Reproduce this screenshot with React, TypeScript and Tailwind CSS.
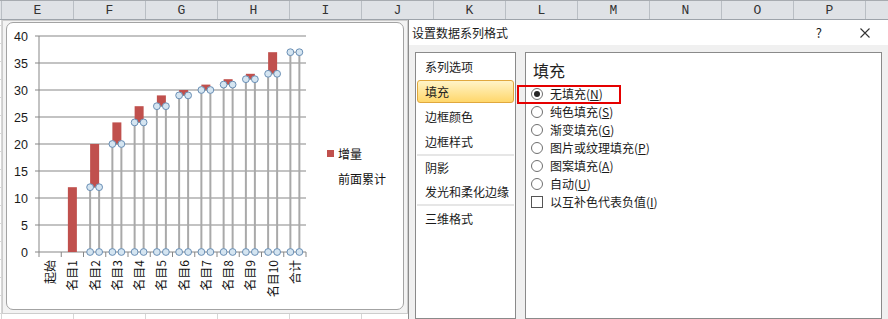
import React from 'react'

const COLS = ['E', 'F', 'G', 'H', 'I', 'J', 'K', 'L', 'M', 'N', 'O', 'P']

const LABELS = ['起始', '名目1', '名目2', '名目3', '名目4', '名目5', '名目6', '名目7', '名目8', '名目9', '名目10', '合计']
// running total before / after each step
const CUM = [0, 12, 20, 24, 27, 29, 30, 31, 32, 33, 37]

const X0 = 39
const CW = 22.25
const cx = (i: number) => X0 + CW * (i + 0.5)
const yOf = (v: number) => 251 - 5.4 * v

const CJK = "font-['Noto_Sans_CJK_SC',sans-serif]"

function SheetHeader() {
  return (
    <div className="flex h-[20px] border-t border-b border-t-[#a7abb0] border-b-[#9da3aa] bg-[#dfe2e6] font-['Liberation_Mono',monospace] text-[13px] text-[#333]">
      <div className="w-[2px] shrink-0 border-r border-[#b9bec4]" />
      {COLS.map((c) => (
        <div key={c} className="flex w-[72px] shrink-0 items-center justify-center border-r border-[#b9bec4] leading-none">
          {c}
        </div>
      ))}
      <div className="flex-1" />
    </div>
  )
}

function WaterfallChart() {
  const grid = [5, 10, 15, 20, 25, 30, 35, 40]
  return (
    <svg width={315} height={285} viewBox="7 23 315 285" className="shrink-0">
      {/* gridlines + ticks */}
      {grid.map((v) => (
        <line key={v} x1={35} x2={306} y1={yOf(v)} y2={yOf(v)} stroke="#878787" strokeWidth={1} />
      ))}
      <line x1={35} x2={306} y1={251} y2={251} stroke="#878787" strokeWidth={1} />
      <line x1={39} x2={39} y1={yOf(40)} y2={251} stroke="#878787" strokeWidth={1} />
      {Array.from({ length: 13 }).map((_, k) => (
        <line key={k} x1={X0 + CW * k} x2={X0 + CW * k} y1={251} y2={256} stroke="#878787" strokeWidth={1} />
      ))}

      {/* y labels */}
      {[0, ...grid].map((v) => (
        <text
          key={v}
          x={28}
          y={yOf(v) + 4.5}
          textAnchor="end"
          fontSize={12.5}
          fontFamily="'Liberation Sans', sans-serif"
          fill="#1a1a1a"
        >
          {v}
        </text>
      ))}

      {/* 增量 bars */}
      {CUM.slice(1).map((top, n) => {
        const i = n + 1
        const base = CUM[i - 1]
        return (
          <rect key={i} x={cx(i) - 4.5} y={yOf(top)} width={9} height={yOf(base) - yOf(top)} fill="#c0504d" />
        )
      })}

      {/* 前面累计 markers with drop lines */}
      {LABELS.map((_, i) => {
        if (i < 2) return null
        const v = CUM[i - 1]
        const xs = [cx(i) - 4.5, cx(i) + 4.5]
        return (
          <g key={i}>
            {xs.map((x) => (
              <line key={x} x1={x} x2={x} y1={yOf(v)} y2={251} stroke="#a9a9a9" strokeWidth={2} />
            ))}
            <line x1={xs[0]} x2={xs[1]} y1={yOf(v)} y2={yOf(v)} stroke="#8a8a8a" strokeWidth={1} />
            {xs.map((x) => (
              <g key={'c' + x}>
                <circle cx={x} cy={yOf(v)} r={3.4} fill="#d5e5f1" stroke="#6a8fb5" strokeWidth={1} />
                <circle cx={x} cy={251} r={3.4} fill="#d5e5f1" stroke="#6a8fb5" strokeWidth={1} />
              </g>
            ))}
          </g>
        )
      })}

      {/* category labels, rotated */}
      {LABELS.map((l, i) => (
        <text
          key={l}
          transform={`translate(${cx(i) + 5},259) rotate(-90)`}
          textAnchor="end"
          fontSize={12}
          fontFamily="'Noto Sans CJK SC', sans-serif"
          fill="#111"
        >
          {l}
        </text>
      ))}
    </svg>
  )
}

function Legend() {
  return (
    <div className={`flex flex-col pl-[5px] text-[12px] text-[#111] ${CJK}`}>
      <div className="flex h-[25px] items-center gap-[4px]">
        <span className="h-[7px] w-[7px] bg-[#c0504d]" />
        <span>增量</span>
      </div>
      <div className="flex h-[25px] items-center gap-[4px]">
        <span className="h-[7px] w-[7px]" />
        <span>前面累计</span>
      </div>
    </div>
  )
}

function Radio({ checked }: { checked?: boolean }) {
  return (
    <span className="flex h-[12px] w-[12px] shrink-0 items-center justify-center rounded-full border border-[#6f6f6f] bg-white">
      {checked && <span className="h-[6px] w-[6px] rounded-full bg-[#262626]" />}
    </span>
  )
}

const FILL_OPTS: Array<{ label: string; key: string; checked?: boolean }> = [
  { label: '无填充', key: 'N', checked: true },
  { label: '纯色填充', key: 'S' },
  { label: '渐变填充', key: 'G' },
  { label: '图片或纹理填充', key: 'P' },
  { label: '图案填充', key: 'A' },
  { label: '自动', key: 'U' },
]

function NavItem({ label, active, h = 'h-[25px]' }: { label: string; active?: boolean; h?: string }) {
  return (
    <div className={`flex ${h} items-center px-[1px]`}>
      <div
        className={`flex h-[23px] w-full items-center rounded-[3px] pl-[7px] ${
          active ? 'border border-[#e0a83e] bg-[linear-gradient(#fff4c8,#ffd76b)]' : 'border border-transparent'
        }`}
      >
        {label}
      </div>
    </div>
  )
}

function FormatDialog() {
  return (
    <div className={`flex flex-1 flex-col border-l border-[#8c8c8c] bg-[#f0f0f0] text-[12px] text-[#1a1a1a] ${CJK}`}>
      <div className="flex h-[25px] shrink-0 items-center bg-white pl-[3px]">
        <span>设置数据系列格式</span>
        <div className="ml-auto flex items-center gap-[38px] pr-[18px]">
          <span className="text-[13px]">?</span>
          <svg width={10} height={10} viewBox="0 0 10 10">
            <path d="M0.5 0.5 L9.5 9.5 M9.5 0.5 L0.5 9.5" stroke="#333" strokeWidth={1.1} />
          </svg>
        </div>
      </div>
      <div className="flex flex-1 gap-[9px] pl-[6px] pr-[6px] pt-[7px]">
        <div className="flex w-[101px] shrink-0 flex-col border border-[#8a8a8a] bg-white pt-[1px]">
          <NavItem label="系列选项" />
          <NavItem label="填充" active />
          <NavItem label="边框颜色" />
          <NavItem label="边框样式" />
          <div className="mx-[1px] h-[2px] bg-[#e6e6e6]" />
          <NavItem label="阴影" h="h-[24px]" />
          <NavItem label="发光和柔化边缘" h="h-[24px]" />
          <div className="mx-[1px] h-[2px] bg-[#e6e6e6]" />
          <NavItem label="三维格式" />
        </div>
        <div className="relative flex flex-1 flex-col border border-[#8a8a8a] bg-white pl-[5px] pt-[7px]">
          <div className="h-[20px] pl-[2px] text-[16px] leading-[20px] text-[#222]">填充</div>
          <div className="mt-[5px] flex flex-col">
            {FILL_OPTS.map((o) => (
              <div key={o.key} className="flex h-[18px] items-center gap-[7px]">
                <Radio checked={o.checked} />
                <span>
                  {o.label}(<u>{o.key}</u>)
                </span>
              </div>
            ))}
            <div className="flex h-[18px] items-center gap-[7px]">
              <span className="h-[12px] w-[12px] shrink-0 border border-[#555] bg-white" />
              <span>
                以互补色代表负值(<u>I</u>)
              </span>
            </div>
          </div>
          {/* annotation box */}
          <div className="absolute left-[-9px] top-[32px] h-[19px] w-[104px] border-2 border-[#e50000]" />
        </div>
      </div>
    </div>
  )
}

export default function App() {
  return (
    <div className="h-[319px] w-[888px] overflow-hidden bg-white">
      <SheetHeader />
      <div className="flex h-[299px] [background-image:linear-gradient(to_right,#d6d6d6_1px,transparent_1px),linear-gradient(to_bottom,#d6d6d6_1px,transparent_1px)] [background-position:1px_5px] [background-size:72px_18px]">
        <div className="ml-[2px] h-[294px] w-[406px] shrink-0 border border-[#cdcdcd] bg-[#f3f3f3] pb-[3px] pl-[3px] pr-[3px] pt-[1px]">
          <div className="flex h-full items-center rounded-[7px] border border-[#a3a3a3] bg-white">
            <WaterfallChart />
            <Legend />
          </div>
        </div>
        <FormatDialog />
      </div>
    </div>
  )
}
